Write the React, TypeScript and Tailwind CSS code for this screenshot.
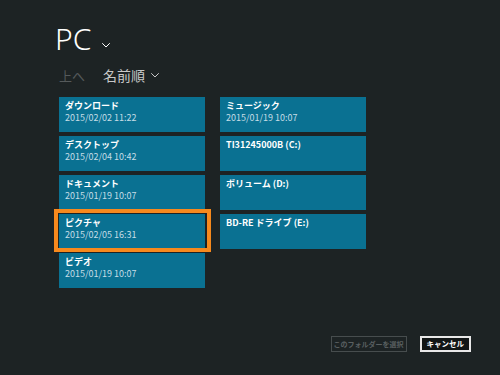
import React from "react";

const jp = { fontFamily: '"Noto Sans CJK JP", "Noto Sans", sans-serif' };

type T = { t: string; d?: string; sel?: boolean };
const left: T[] = [
  { t: "ダウンロード", d: "2015/02/02 11:22" },
  { t: "デスクトップ", d: "2015/02/04 10:42" },
  { t: "ドキュメント", d: "2015/01/19 10:07" },
  { t: "ピクチャ", d: "2015/02/05 16:31", sel: true },
  { t: "ビデオ", d: "2015/01/19 10:07" },
];
const right: T[] = [
  { t: "ミュージック", d: "2015/01/19 10:07" },
  { t: "TI31245000B (C:)" },
  { t: "ボリューム (D:)" },
  { t: "BD-RE ドライブ (E:)" },
];

function Tile({ t, d, sel }: T) {
  return (
    <div className="relative w-[146px] h-[35px] bg-[#0a7192] pl-[6px] pt-[4px] leading-none">
      {sel && (
        <div className="absolute -left-[5px] -right-[6px] -top-[5px] -bottom-[3px] border-[4px] border-[#f7891d]" />
      )}
      <div className="text-[9px] font-bold text-white" style={jp}>{t}</div>
      {d && <div className="mt-[3px] text-[9px] text-[#c5dde6]" style={jp}>{d}</div>}
    </div>
  );
}

function Chev({ c, s }: { c: string; s: number }) {
  return (
    <svg width={s} height={s / 1.6} viewBox="0 0 16 10" fill="none" stroke={c} strokeWidth="1.6">
      <path d="M2 2 L8 8 L14 2" />
    </svg>
  );
}

export default function App() {
  return (
    <div className="w-[500px] h-[375px] bg-[#1d2324] relative overflow-hidden" style={jp}>
      <div className="pl-[55px] pt-[24px] flex items-end gap-[10px]">
        <span className="text-[30px] text-white font-light leading-none" style={{ fontFamily: '"Noto Sans", sans-serif' }}>PC</span>
        <span className="mb-[6px]"><Chev c="#ffffff" s={10} /></span>
      </div>
      <div className="pl-[59px] pt-[14px] flex items-center text-[14px] leading-none">
        <span className="text-[#555a5b] text-[13px]">上へ</span>
        <span className="ml-[18px] text-[#c8c8c8]">名前順</span>
        <span className="ml-[5px]"><Chev c="#c8c8c8" s={10} /></span>
      </div>
      <div className="pl-[59px] pt-[15px] flex gap-[15px]">
        <div className="flex flex-col gap-[4px]">
          {left.map((x) => <Tile key={x.t} {...x} />)}
        </div>
        <div className="flex flex-col gap-[4px]">
          {right.map((x) => <Tile key={x.t} {...x} />)}
        </div>
      </div>
      <div className="absolute right-[29px] bottom-[23px] flex gap-[13px] items-center">
        <div className="h-[16px] px-[2px] border border-[#474d4e] text-[7px] font-bold text-[#5a6061] flex items-center">このフォルダーを選択</div>
        <div className="h-[16px] px-[5px] border-[2px] border-[#e8e8e8] bg-[#121616] text-[7.5px] font-bold text-white flex items-center">キャンセル</div>
      </div>
    </div>
  );
}
